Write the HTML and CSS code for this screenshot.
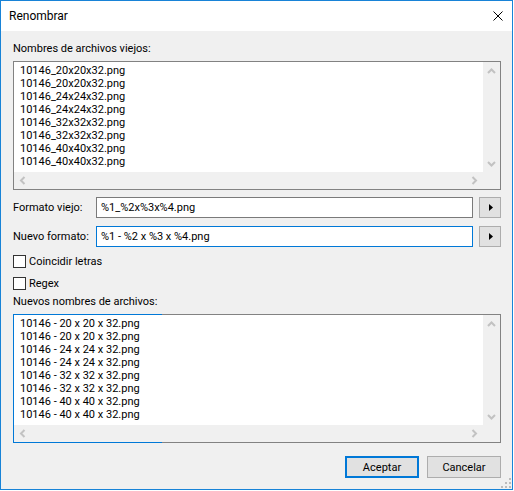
FILE: index.html
```html
<!DOCTYPE html>
<html lang="es">
<head>
<meta charset="utf-8">
<title>Renombrar</title>
<link rel="stylesheet" href="styles.css">
</head>
<body>
<div class="window">
  <div class="titlebar">
    <span class="title">Renombrar</span>
    <svg class="close" width="10" height="10" viewBox="0 0 10 10"><path d="M0.5 0.5 L9.5 9.5 M9.5 0.5 L0.5 9.5" stroke="#000" stroke-width="1" fill="none"/></svg>
  </div>
  <div class="client">
    <div class="group-label">Nombres de archivos viejos:</div>
    <div class="listbox">
      <div class="list-items">
        <div>10146_20x20x32.png</div>
        <div>10146_20x20x32.png</div>
        <div>10146_24x24x32.png</div>
        <div>10146_24x24x32.png</div>
        <div>10146_32x32x32.png</div>
        <div>10146_32x32x32.png</div>
        <div>10146_40x40x32.png</div>
        <div>10146_40x40x32.png</div>
      </div>
      <div class="vscroll">
        <svg width="17" height="17" viewBox="0 0 17 17"><polyline points="5,11 8.5,7.5 12,11" class="chev"/></svg>
        <svg width="17" height="17" viewBox="0 0 17 17"><polyline points="5,7 8.5,10.5 12,7" class="chev"/></svg>
      </div>
      <div class="hscroll">
        <svg width="17" height="17" viewBox="0 0 17 17"><polyline points="10.5,5 7,8.5 10.5,12" class="chev"/></svg>
        <svg width="17" height="17" viewBox="0 0 17 17"><polyline points="6.5,5 10,8.5 6.5,12" class="chev"/></svg>
      </div>
      <div class="corner"></div>
    </div>

    <div class="field-row first">
      <span class="field-label">Formato viejo:</span>
      <div class="textbox">%1_%2x%3x%4.png</div>
      <div class="spin-btn"><svg width="4" height="7" viewBox="0 0 4 7"><polygon points="0,0 4,3.5 0,7" fill="#000"/></svg></div>
    </div>
    <div class="field-row second">
      <span class="field-label">Nuevo formato:</span>
      <div class="textbox focused">%1 - %2 x %3 x %4.png</div>
      <div class="spin-btn"><svg width="4" height="7" viewBox="0 0 4 7"><polygon points="0,0 4,3.5 0,7" fill="#000"/></svg></div>
    </div>

    <div class="check first"><span class="check-box"></span>Coincidir letras</div>
    <div class="check second"><span class="check-box"></span>Regex</div>

    <div class="group-label lower">Nuevos nombres de archivos:</div>
    <div class="listbox focused">
      <div class="list-items">
        <div>10146 - 20 x 20 x 32.png</div>
        <div>10146 - 20 x 20 x 32.png</div>
        <div>10146 - 24 x 24 x 32.png</div>
        <div>10146 - 24 x 24 x 32.png</div>
        <div>10146 - 32 x 32 x 32.png</div>
        <div>10146 - 32 x 32 x 32.png</div>
        <div>10146 - 40 x 40 x 32.png</div>
        <div>10146 - 40 x 40 x 32.png</div>
      </div>
      <div class="vscroll">
        <svg width="17" height="17" viewBox="0 0 17 17"><polyline points="5,11 8.5,7.5 12,11" class="chev"/></svg>
        <svg width="17" height="17" viewBox="0 0 17 17"><polyline points="5,7 8.5,10.5 12,7" class="chev"/></svg>
      </div>
      <div class="hscroll">
        <svg width="17" height="17" viewBox="0 0 17 17"><polyline points="10.5,5 7,8.5 10.5,12" class="chev"/></svg>
        <svg width="17" height="17" viewBox="0 0 17 17"><polyline points="6.5,5 10,8.5 6.5,12" class="chev"/></svg>
      </div>
      <div class="corner"></div>
    </div>

    <div class="actions">
      <div class="btn default">Aceptar</div>
      <div class="btn">Cancelar</div>
    </div>
  </div>
  <svg class="grip" width="10" height="10" viewBox="0 0 10 10">
    <rect x="8" y="0" width="2" height="2" fill="#bcbcbc"/>
    <rect x="4" y="4" width="2" height="2" fill="#bcbcbc"/>
    <rect x="8" y="4" width="2" height="2" fill="#bcbcbc"/>
    <rect x="0" y="8" width="2" height="2" fill="#bcbcbc"/>
    <rect x="4" y="8" width="2" height="2" fill="#bcbcbc"/>
    <rect x="8" y="8" width="2" height="2" fill="#bcbcbc"/>
  </svg>
</div>
</body>
</html>
```

FILE: styles.css
```css
* {
  box-sizing: border-box;
}

html,
body {
  margin: 0;
  background: #ffffff;
}

body {
  font-family: Roboto, "Liberation Sans", sans-serif;
  font-size: 11px;
  color: #000000;
}

.window {
  position: relative;
  width: 513px;
  height: 490px;
  border: 1px solid #1883d7;
  background: #f0f0f0;
  display: flex;
  flex-direction: column;
}

.titlebar {
  flex: none;
  height: 30px;
  background: #ffffff;
  display: flex;
  align-items: center;
  padding-left: 8px;
}

.title {
  font-size: 12px;
}

.close {
  margin-left: auto;
  margin-right: 9px;
}

.client {
  flex: 1;
  display: flex;
  flex-direction: column;
  padding: 10px 11px 11px 12px;
}

.group-label {
  line-height: 16px;
  margin-bottom: 4px;
}

.group-label.lower {
  margin-top: 4px;
}

.listbox {
  height: 129px;
  border: 1px solid #828282;
  background: #f0f0f0;
  display: grid;
  grid-template-columns: 1fr 17px;
  grid-template-rows: 1fr 17px;
}

.listbox.focused {
  border: none;
  padding: 1px;
  background:
    linear-gradient(#f0f0f0, #f0f0f0) content-box,
    linear-gradient(to right, #0078d7 0, #0078d7 149px, #828282 149px);
}

.list-items {
  background: #ffffff;
  padding: 2px 0 0 6px;
  line-height: 13px;
  overflow: hidden;
  white-space: nowrap;
}

.vscroll {
  display: flex;
  flex-direction: column;
  justify-content: space-between;
}

.hscroll {
  display: flex;
  justify-content: space-between;
}

.vscroll svg,
.hscroll svg {
  display: block;
}

.chev {
  fill: none;
  stroke: #c2c2c2;
  stroke-width: 2;
}

.corner {
  background: #f0f0f0;
}

.field-row {
  display: flex;
  align-items: center;
  height: 21px;
}

.field-row.first {
  margin-top: 7px;
}

.field-row.second {
  margin-top: 8px;
}

.field-label {
  width: 83px;
  flex: none;
}

.textbox {
  flex: 1;
  height: 21px;
  border: 1px solid #7a7a7a;
  background: #ffffff;
  padding-left: 4px;
  line-height: 19px;
  white-space: nowrap;
}

.textbox.focused {
  border-color: #0078d7;
}

.spin-btn {
  flex: none;
  width: 22px;
  height: 21px;
  margin-left: 6px;
  border: 1px solid #adadad;
  background: #e1e1e1;
  display: flex;
  align-items: center;
  justify-content: center;
}

.spin-btn svg {
  display: block;
  margin-left: 1px;
}

.check {
  display: flex;
  align-items: center;
  height: 13px;
}

.check.first {
  margin-top: 8px;
}

.check.second {
  margin-top: 9px;
}

.check-box {
  width: 13px;
  height: 13px;
  border: 1px solid #333333;
  background: #ffffff;
  margin-right: 3px;
  flex: none;
}

.actions {
  display: flex;
  justify-content: flex-end;
  gap: 8px;
  margin-top: 13px;
}

.btn {
  width: 74px;
  height: 22px;
  border: 1px solid #adadad;
  background: #e1e1e1;
  display: flex;
  align-items: center;
  justify-content: center;
}

.btn.default {
  border: 2px solid #0078d7;
}

.grip {
  position: absolute;
  right: 1px;
  bottom: 1px;
}
```
